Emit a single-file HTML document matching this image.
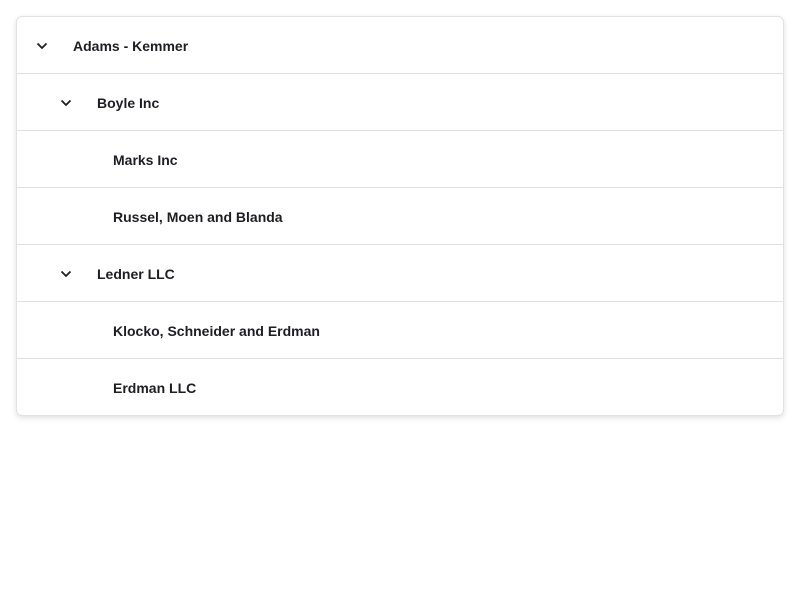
<!DOCTYPE html>
<html><head><style>
body{margin:0;background:#fff;font-family:"Liberation Sans",sans-serif;}
.card{position:absolute;left:16px;top:16px;width:766px;height:398px;border:1px solid #e2e2e2;border-radius:6px;box-shadow:0 2px 6px rgba(0,0,0,0.12);overflow:hidden;background:#fff}
.row{position:relative;height:56px;border-bottom:1px solid #e0e0e0;font-size:14px;font-weight:bold;color:#1d1d22;}
.row:last-child{border-bottom:none}
.row span{position:absolute;top:21px;letter-spacing:0}
.row svg{position:absolute;top:25px}
</style></head><body>
<div class="card">
<div class="row"><svg style="left:19px" width="12" height="8" viewBox="0 0 12 8"><path d="M1.5 1.5L6 6L10.5 1.5" fill="none" stroke="#1d1d22" stroke-width="1.8"/></svg><span style="left:56px">Adams - Kemmer</span></div>
<div class="row"><svg style="left:43px" width="12" height="8" viewBox="0 0 12 8"><path d="M1.5 1.5L6 6L10.5 1.5" fill="none" stroke="#1d1d22" stroke-width="1.8"/></svg><span style="left:80px">Boyle Inc</span></div>
<div class="row"><span style="left:96px">Marks Inc</span></div>
<div class="row"><span style="left:96px">Russel, Moen and Blanda</span></div>
<div class="row"><svg style="left:43px" width="12" height="8" viewBox="0 0 12 8"><path d="M1.5 1.5L6 6L10.5 1.5" fill="none" stroke="#1d1d22" stroke-width="1.8"/></svg><span style="left:80px">Ledner LLC</span></div>
<div class="row"><span style="left:96px">Klocko, Schneider and Erdman</span></div>
<div class="row"><span style="left:96px">Erdman LLC</span></div>
</div>
</body></html>
